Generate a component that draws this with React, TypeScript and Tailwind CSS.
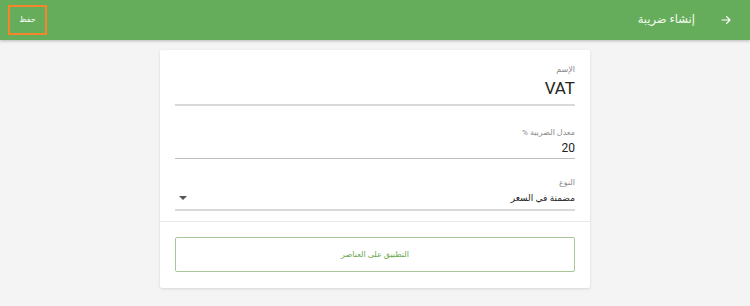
import React from "react";

export default function App() {
  return (
    <div className="w-[750px] h-[306px] bg-[#f4f4f4] overflow-hidden" style={{ fontFamily: "Roboto, 'DejaVu Sans', sans-serif" }}>
      <header className="h-[40px] bg-[#66ad5b] flex items-center justify-between px-[8px] shadow-[0_1px_3px_rgba(0,0,0,0.25)] relative z-10">
        <div className="w-[39px] h-[30px] border-2 border-[#f5842c] flex items-center justify-center">
          <span className="text-white text-[8px] leading-none">حفظ</span>
        </div>
        <div className="flex items-center gap-[25px] pr-[10px]">
          <span className="text-[#f4fbf2] text-[11.5px]">إنشاء ضريبة</span>
          <svg width="12" height="12" viewBox="0 0 24 24" fill="none" stroke="white" strokeWidth="2.2" strokeLinecap="round" strokeLinejoin="round">
            <path d="M4 12h16M13 5l7 7-7 7" />
          </svg>
        </div>
      </header>
      <div className="flex justify-center pt-[10px]">
        <div dir="rtl" className="w-[430px] bg-white rounded-[2px] shadow-[0_1px_3px_rgba(0,0,0,0.12)] pb-[16px]">
          <div className="px-[15px]">
            <div className="pt-[14px] border-b-2 border-[#d9d9d9]">
              <div className="text-[8px] leading-[12px] text-[#8a8a8a]">الإسم</div>
              <div className="text-[17px] leading-[24px] text-[#222] pb-[4px]">VAT</div>
            </div>
            <div className="pt-[21px] border-b border-[#bdbdbd]">
              <div className="text-[8px] leading-[12px] text-[#8a8a8a]">معدل الضريبة %</div>
              <div className="text-[12px] leading-[18px] text-[#222] pb-[1px]">20</div>
            </div>
            <div className="pt-[18px] border-b-2 border-[#d9d9d9]">
              <div className="text-[8px] leading-[12px] text-[#8a8a8a]">النوع</div>
              <div className="flex items-center justify-between text-[9px] leading-[18px] text-[#222] pb-[2px]">
                <span>مضمنة في السعر</span>
                <span className="ml-[4px] w-0 h-0 border-l-[4px] border-r-[4px] border-t-[4px] border-l-transparent border-r-transparent border-t-[#555]" />
              </div>
            </div>
          </div>
          <div className="mt-[10px] border-t border-[#e8e8e8]" />
          <div className="px-[15px] pt-[15px]">
            <div className="h-[35px] border border-[#a9c796] rounded-[2px] flex items-center justify-center">
              <span className="text-[8px] text-[#6aa84f]">التطبيق على العناصر</span>
            </div>
          </div>
        </div>
      </div>
    </div>
  );
}
